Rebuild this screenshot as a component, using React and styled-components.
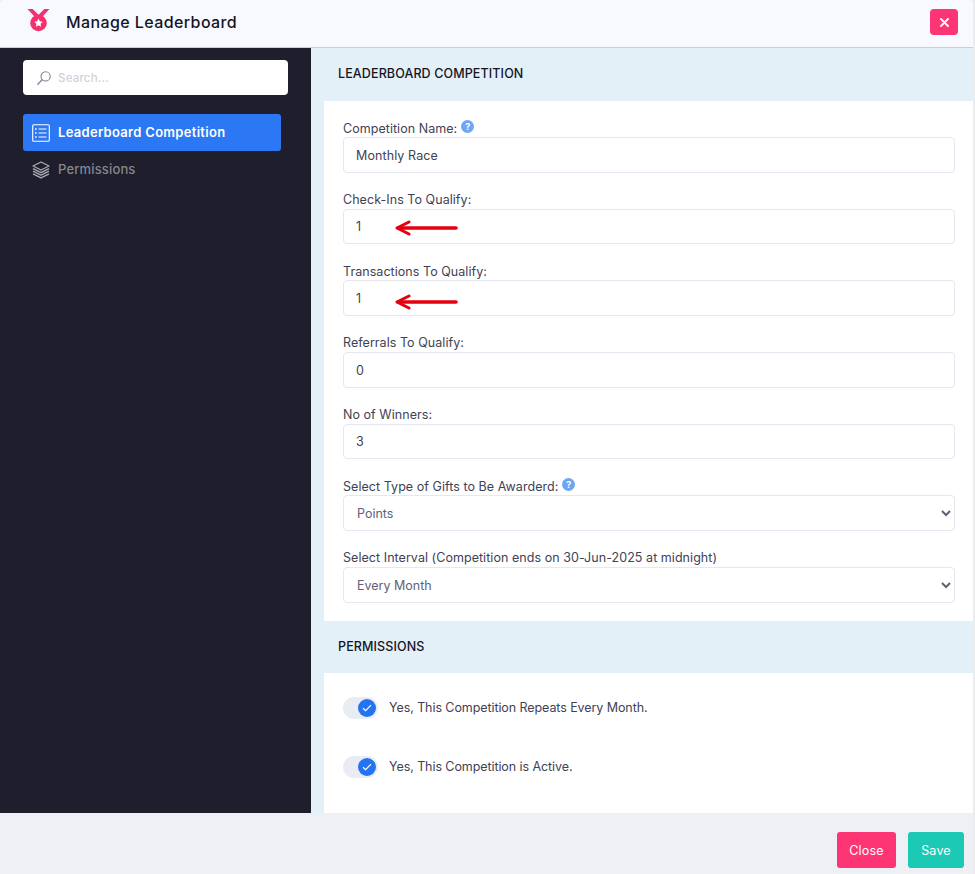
import React from "react";
import styled, { createGlobalStyle } from "styled-components";

const GlobalStyle = createGlobalStyle`
  * { box-sizing: border-box; }
  html, body { margin: 0; padding: 0; height: 100%; background: #ececec; }
  body { font-family: Inter, "Open Sans", sans-serif; color: #3f4254; }
`;

const Modal = styled.div`
  display: flex;
  flex-direction: column;
  width: 973px;
  height: 874px;
  background: #eff0f6;
`;

const Header = styled.header`
  position: relative;
  z-index: 2;
  display: flex;
  align-items: center;
  height: 48px;
  padding: 0 15px 0 26px;
  background: #f8f9fe;
  border-bottom: 1px solid #c9cfd4;
  border-radius: 5px 5px 0 0;
`;

const Title = styled.h1`
  flex: 1;
  margin: 0 0 4px 15px;
  font-size: 16px;
  font-weight: 500;
  letter-spacing: 0.4px;
  color: #15151f;
`;

const IconButton = styled.button`
  display: flex;
  align-items: center;
  justify-content: center;
  width: 28px;
  height: 26px;
  margin-bottom: 3px;
  padding: 0;
  border: 0;
  border-radius: 4px;
  background: #fd3574;
  color: #fff;
`;

const Body = styled.div`
  display: flex;
  height: 765px;
`;

const Sidebar = styled.aside`
  display: flex;
  flex-direction: column;
  width: 311px;
  padding: 12px 23px 0;
  background: #1e1e2d;
`;

const SearchBox = styled.div`
  display: flex;
  align-items: center;
  gap: 6px;
  width: 265px;
  height: 35px;
  margin-bottom: 19px;
  padding-left: 13px;
  border-radius: 4px;
  background: #fff;
  color: #7d86a0;
`;

const SearchInput = styled.input`
  flex: 1;
  min-width: 0;
  border: 0;
  outline: 0;
  padding: 0;
  background: transparent;
  font: 500 11.5px Inter, sans-serif;
  letter-spacing: 0.2px;
  &::placeholder { color: #d0d2d8; opacity: 1; }
`;

const NavItem = styled.div`
  display: flex;
  align-items: center;
  gap: 8px;
  width: 258px;
  height: 37px;
  padding: 0 0 2px 9px;
  border-radius: 3px;
  background: ${p => (p.$active ? "#2b77f4" : "transparent")};
  color: ${p => (p.$active ? "#fff" : "#85868f")};
  font-size: 13px;
  font-weight: ${p => (p.$active ? 600 : 500)};
  letter-spacing: ${p => (p.$active ? "0.3px" : "0.15px")};

  svg {
    flex: none;
    margin-top: 2px;
    color: ${p => (p.$active ? "#fff" : "#a9aab1")};
  }
`;

const Main = styled.main`
  flex: 1;
  display: flex;
  flex-direction: column;
  padding-left: 13px;
  background: #e3f0f8;
`;

const SectionHeader = styled.h2`
  display: flex;
  align-items: center;
  height: ${p => p.$height}px;
  margin: 0;
  padding: 0 0 2px 14px;
  font-size: 12.5px;
  font-weight: 500;
  letter-spacing: 0.12px;
  color: #15151f;
  text-transform: uppercase;
`;

const FormPanel = styled.div`
  display: flex;
  flex-direction: column;
  gap: 18px;
  height: 520px;
  padding: 18px 18px 0 19px;
  background: #fff;
`;

const Field = styled.div`
  position: relative;
  display: flex;
  flex-direction: column;
`;

const Label = styled.label`
  display: flex;
  align-items: center;
  gap: 4px;
  height: 18px;
  font-size: 12.5px;
  letter-spacing: 0.05px;
  color: #3f4254;
`;

const Help = styled.span`
  display: inline-flex;
  align-items: center;
  justify-content: center;
  width: 13px;
  height: 13px;
  margin-bottom: 3px;
  border-radius: 50%;
  background: #6fa5f5;
  color: #fff;
  font-size: 9px;
  font-weight: 700;
`;

const TextInput = styled.input`
  width: 100%;
  height: 35.67px;
  padding: 1px 12px 0;
  border: 1px solid #e6e7f1;
  border-radius: 4px;
  outline: 0;
  background: #fff;
  font: 400 12.5px Inter, sans-serif;
  letter-spacing: 0.1px;
  color: #3f4254;
`;

const Select = styled.select`
  width: 100%;
  height: 35.67px;
  padding: 1px 9px 0;
  border: 1px solid #e6e7f1;
  border-radius: 4px;
  outline: 0;
  background: #fff;
  font: 400 12.5px Inter, sans-serif;
  letter-spacing: 0;
  color: #5e6278;
`;

const ArrowMark = styled.svg`
  position: absolute;
  left: 51px;
  top: ${p => p.$top}px;
`;

const TogglePanel = styled.div`
  display: flex;
  flex-direction: column;
  gap: 37px;
  flex: 1;
  padding: 24px 19px 0;
  background: #fff;
`;

const ToggleRow = styled.div`
  display: flex;
  align-items: center;
  gap: 11px;
  height: 22px;
  font-size: 12.5px;
  letter-spacing: -0.08px;
  color: #3f4254;
`;

const ToggleText = styled.span`
  margin-bottom: 2px;
`;

const Track = styled.span`
  display: flex;
  justify-content: flex-end;
  align-items: center;
  width: 35px;
  height: 22px;
  padding-right: 2px;
  border-radius: 11px;
  background: #e9ecf3;
`;

const Knob = styled.span`
  display: flex;
  align-items: center;
  justify-content: center;
  width: 18px;
  height: 18px;
  border-radius: 50%;
  background: #2473f0;
`;

const Footer = styled.footer`
  display: flex;
  justify-content: flex-end;
  gap: 12px;
  flex: 1;
  padding: 19px 9px 0 0;
`;

const ActionButton = styled.button`
  height: 36px;
  padding: 0;
  width: ${p => p.$width}px;
  border: 0;
  border-radius: 3px;
  background: ${p => p.$bg};
  color: #fff;
  font: 400 12.5px Inter, sans-serif;
  letter-spacing: 0.2px;
`;

const MedalSvg = styled.svg`
  flex: none;
  margin-bottom: 5px;
`;

const MedalIcon = () => (
  <MedalSvg width="25" height="26" viewBox="0 0 25 26">
    <path d="M1.5 1h5.2l6.5 6.5-3 3zM23.5 1h-5.2l-6.5 6.5 3 3z" fill="#f5306f" />
    <circle cx="12.5" cy="15" r="8.3" fill="#f5306f" />
    <path
      d="M12.5 10.6l1.3 2.7 3 .4-2.2 2.1.5 2.9-2.6-1.4-2.6 1.4.5-2.9-2.2-2.1 3-.4z"
      fill="#fff"
    />
  </MedalSvg>
);

const SearchIcon = () => (
  <svg width="16" height="16" viewBox="0 0 16 16" fill="none" stroke="currentColor" strokeWidth="1.1">
    <circle cx="9.6" cy="6.4" r="4.6" />
    <path d="M6.2 9.8L1.8 14.2" strokeWidth="1.4" strokeLinecap="round" />
  </svg>
);

const ListIcon = () => (
  <svg width="18" height="18" viewBox="0 0 18 18" fill="none" stroke="currentColor">
    <rect x="0.7" y="0.7" width="16.6" height="16.6" rx="1" strokeWidth="1.1" />
    <path d="M6.5 5h8M6.5 9h8M6.5 13h8" strokeWidth="1.1" />
    <path d="M3 5h1.6M3 9h1.6M3 13h1.6" strokeWidth="1.6" />
  </svg>
);

const LayersIcon = () => (
  <svg width="18" height="18" viewBox="0 0 18 18" fill="none" stroke="currentColor" strokeWidth="1.3" strokeLinejoin="round">
    <path d="M9 1L17 5 9 9 1 5z" />
    <path d="M1 7.6l8 4 8-4M1 10.2l8 4 8-4M1 12.8l8 4 8-4" />
  </svg>
);

const CloseGlyph = () => (
  <svg width="9" height="9" viewBox="0 0 9 9" stroke="#fff" strokeWidth="1.9" strokeLinecap="round">
    <path d="M1 1l7 7M8 1L1 8" />
  </svg>
);

const RedArrow = ({ top }) => (
  <ArrowMark $top={top} width="64" height="16" viewBox="0 0 64 16" fill="none" stroke="#e5000f" strokeLinecap="round" strokeLinejoin="round">
    <path d="M4 8h58" strokeWidth="3.6" />
    <path d="M15 2L3 8l12 6" strokeWidth="3" />
  </ArrowMark>
);

const Toggle = ({ children }) => (
  <ToggleRow>
    <Track>
      <Knob>
        <svg width="10" height="8" viewBox="0 0 10 8" fill="none" stroke="#fff" strokeWidth="1.2">
          <path d="M1 4.2l2.6 2.4L9 1.2" />
        </svg>
      </Knob>
    </Track>
    <ToggleText>{children}</ToggleText>
  </ToggleRow>
);

export default function App() {
  return (
    <>
      <GlobalStyle />
      <Modal>
        <Header>
          <MedalIcon />
          <Title>Manage Leaderboard</Title>
          <IconButton aria-label="Close">
            <CloseGlyph />
          </IconButton>
        </Header>
        <Body>
          <Sidebar>
            <SearchBox>
              <SearchIcon />
              <SearchInput placeholder="Search..." />
            </SearchBox>
            <NavItem $active>
              <ListIcon />
              Leaderboard Competition
            </NavItem>
            <NavItem>
              <LayersIcon />
              Permissions
            </NavItem>
          </Sidebar>
          <Main>
            <SectionHeader $height={53}>Leaderboard Competition</SectionHeader>
            <FormPanel>
              <Field>
                <Label>
                  Competition Name: <Help>?</Help>
                </Label>
                <TextInput readOnly defaultValue="Monthly Race" />
              </Field>
              <Field>
                <Label>Check-Ins To Qualify:</Label>
                <TextInput readOnly defaultValue="1" />
                <RedArrow top={29} />
              </Field>
              <Field>
                <Label>Transactions To Qualify:</Label>
                <TextInput readOnly defaultValue="1" />
                <RedArrow top={32} />
              </Field>
              <Field>
                <Label>Referrals To Qualify:</Label>
                <TextInput readOnly defaultValue="0" />
              </Field>
              <Field>
                <Label>No of Winners:</Label>
                <TextInput readOnly defaultValue="3" />
              </Field>
              <Field>
                <Label>
                  Select Type of Gifts to Be Awarderd: <Help>?</Help>
                </Label>
                <Select defaultValue="Points">
                  <option>Points</option>
                </Select>
              </Field>
              <Field>
                <Label>Select Interval (Competition ends on 30-Jun-2025 at midnight)</Label>
                <Select defaultValue="Every Month">
                  <option>Every Month</option>
                </Select>
              </Field>
            </FormPanel>
            <SectionHeader $height={52}>Permissions</SectionHeader>
            <TogglePanel>
              <Toggle>Yes, This Competition Repeats Every Month.</Toggle>
              <Toggle>Yes, This Competition is Active.</Toggle>
            </TogglePanel>
          </Main>
        </Body>
        <Footer>
          <ActionButton $width={59} $bg="#fd3574">Close</ActionButton>
          <ActionButton $width={56} $bg="#1cc9b5">Save</ActionButton>
        </Footer>
      </Modal>
    </>
  );
}
